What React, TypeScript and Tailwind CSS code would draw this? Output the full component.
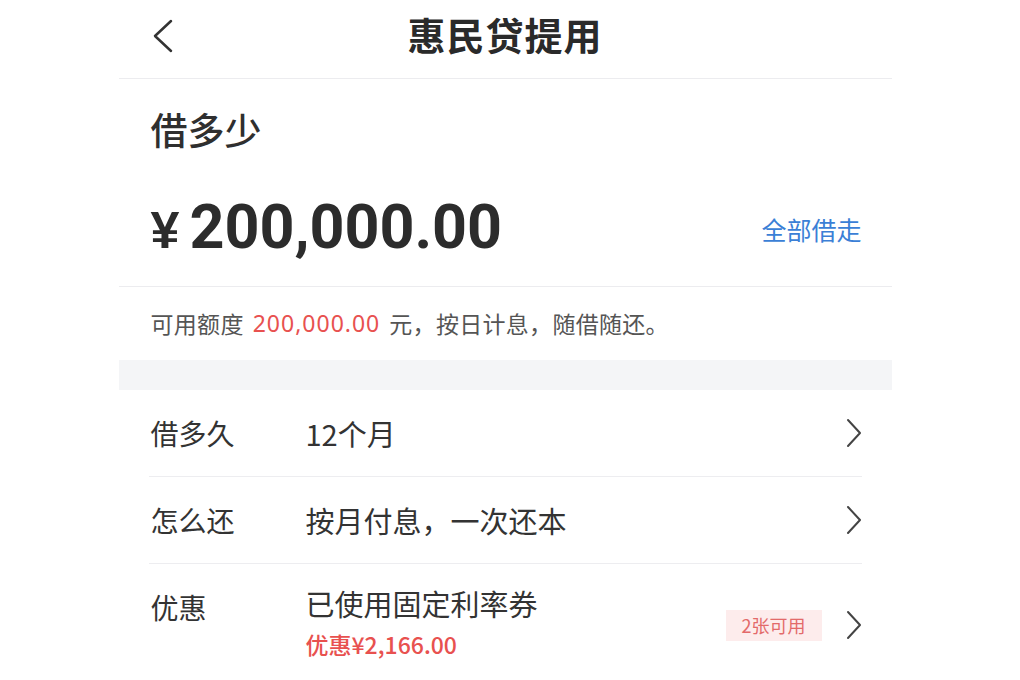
import React from 'react'

const cjk = { fontFamily: '"Noto Sans CJK SC", "Noto Sans", sans-serif' }

function Chevron() {
  return (
    <svg width="16" height="30" viewBox="0 0 16 30" fill="none" className="shrink-0">
      <polyline points="2,2 14,15 2,28" stroke="#444" strokeWidth="2" strokeLinecap="round" strokeLinejoin="round" />
    </svg>
  )
}

function Row({ label, value, sub, badge, last }: { label: string; value: string; sub?: string; badge?: string; last?: boolean }) {
  return (
    <div className={`mx-[30px] flex items-center ${sub ? 'h-[100px] items-start pt-[22px]' : 'h-[87px]'} ${last ? '' : 'border-b border-[#ededf0]'}`}>
      <div className="w-[157px] pl-[2px] text-[28px] text-[#333]">{label}</div>
      <div className="flex-1">
        <div className="text-[29px] text-[#333] leading-[34px]">{value}</div>
        {sub && <div className="mt-[10px] text-[23px] font-medium text-[#e8514f] leading-[28px]">{sub}</div>}
      </div>
      {badge && (
        <span className={`mr-[24px] bg-[#fdecec] px-[16px] py-[2px] text-[18px] text-[#e36a6a] ${sub ? 'mt-[24px]' : ''}`}>{badge}</span>
      )}
      <div className={sub ? 'mt-[24px]' : ''}>
        <Chevron />
      </div>
    </div>
  )
}

export default function App() {
  return (
    <div className="min-h-[680px] w-full bg-white" style={cjk}>
      <div className="mx-auto w-[773px] -translate-x-[5px]">
        <header className="relative flex h-[79px] justify-center border-b border-[#ececef] pt-[8px]">
          <svg width="26" height="36" viewBox="0 0 26 36" fill="none" className="absolute left-[32px] top-[18px]">
            <polyline points="20,3 4,18 20,33" stroke="#333" strokeWidth="2.5" strokeLinecap="round" strokeLinejoin="round" />
          </svg>
          <h1 className="text-[38px] font-bold text-[#2a2a2a] leading-[52px] tracking-[1px]">惠民贷提用</h1>
        </header>

        <section className="border-b border-[#ececef] px-[32px] h-[208px] pt-[24px]">
          <div className="text-[37px] font-medium text-[#2f2f2f] leading-[52px]">借多少</div>
          <div className="mt-[36px] flex items-center justify-between">
            <div className="flex items-baseline text-[#2c2c2c]">
              <span className="text-[52px] font-bold mr-[10px]" style={{ fontFamily: '"Liberation Sans", sans-serif' }}>¥</span>
              <span className="text-[61px] font-bold leading-[64px]" style={{ fontFamily: 'Roboto, "Liberation Sans", sans-serif' }}>200,000.00</span>
            </div>
            <span className="mr-[-2px] text-[25px] text-[#3b7fd6]">全部借走</span>
          </div>
        </section>

        <div className="flex h-[73px] items-center px-[32px] text-[23px] tracking-[0.3px] text-[#555]">
          可用额度<span className="mx-[9px] tracking-[1px] text-[#e8514f]" style={{ fontFamily: '"Noto Sans", sans-serif' }}>200,000.00</span>元，按日计息，随借随还。
        </div>

        <div className="h-[30px] bg-[#f4f5f7]" />

        <Row label="借多久" value="12个月" />
        <Row label="怎么还" value="按月付息，一次还本" />
        <Row label="优惠" value="已使用固定利率券" sub="优惠¥2,166.00" badge="2张可用" last />
      </div>
    </div>
  )
}
